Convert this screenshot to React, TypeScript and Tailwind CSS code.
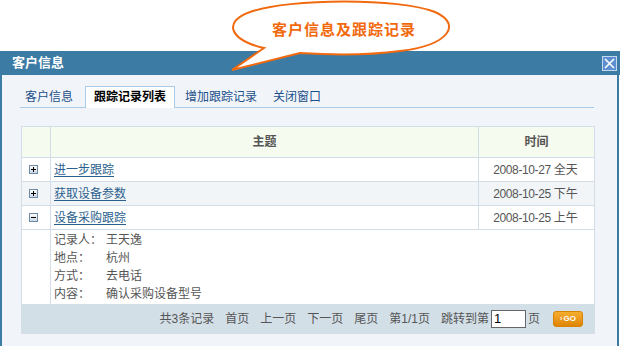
import React from "react";

const FONT = { fontFamily: '"Liberation Sans", "Noto Sans CJK SC", sans-serif' };

function PlusIcon({ minus }: { minus?: boolean }) {
  return (
    <svg width="9" height="9" viewBox="0 0 9 9" className="block">
      <defs>
        <linearGradient id={minus ? "gm" : "gp"} x1="0" y1="0" x2="0" y2="1">
          <stop offset="0" stopColor="#ffffff" />
          <stop offset="1" stopColor="#c9d6e3" />
        </linearGradient>
      </defs>
      <rect x="0.5" y="0.5" width="8" height="8" fill={`url(#${minus ? "gm" : "gp"})`} stroke="#6f8aa6" />
      <rect x="2" y="4" width="5" height="1" fill="#000" />
      {!minus && <rect x="4" y="2" width="1" height="5" fill="#000" />}
    </svg>
  );
}

const rows = [
  { title: "进一步跟踪", date: "2008-10-27", part: "全天", bg: "bg-white", minus: false },
  { title: "获取设备参数", date: "2008-10-25", part: "下午", bg: "bg-[#f1f5f8]", minus: false },
  { title: "设备采购跟踪", date: "2008-10-25", part: "上午", bg: "bg-white", minus: true },
];

const details = [
  ["记录人：", "王天逸"],
  ["地点：", "杭州"],
  ["方式：", "去电话"],
  ["内容：", "确认采购设备型号"],
];

export default function App() {
  return (
    <div className="relative w-[620px] h-[346px] bg-white overflow-hidden text-[12px]" style={FONT}>
      <div className="h-[51px]" />
      {/* header */}
      <div className="h-[24px] bg-[#3b7ba4] flex items-center justify-between pl-[12px] pr-[3px]">
        <span className="text-white font-bold text-[13px]">客户信息</span>
        <svg width="15" height="15" viewBox="0 0 15 15">
          <rect x="0.5" y="0.5" width="14" height="14" fill="#5b8fd2" stroke="#c6d8ef" />
          <path d="M3 3 L12 12 M12 3 L3 12" stroke="#ffffff" strokeWidth="1.6" />
        </svg>
      </div>
      {/* body */}
      <div className="h-[271px] bg-[#f1f5f9] border-l-[2px] border-r-[2px] border-[#3b7ba4] mr-[1px] pt-[11px]">
        {/* tabs */}
        <div className="ml-[18px] w-[574px] h-[22px] flex items-end border-b border-[#a9cbea]">
          <div className="h-[21px] px-[5px] flex items-center text-[#1d4f8a]">客户信息</div>
          <div className="ml-[7px] h-[22px] px-[8px] flex items-center bg-white border border-b-0 border-[#a9cbea] text-black font-bold mb-[-1px] pb-[1px]">跟踪记录列表</div>
          <div className="ml-[5px] h-[21px] px-[5px] flex items-center text-[#1d4f8a]">增加跟踪记录</div>
          <div className="ml-[6px] h-[21px] px-[5px] flex items-center text-[#1d4f8a]">关闭窗口</div>
        </div>
        {/* table */}
        <div className="ml-[19px] mt-[18px] w-[574px] border border-[#d3dde7] bg-white">
          <div className="flex h-[31px] bg-[#f5fbef] border-b border-[#d3dde7] text-[#555] font-bold">
            <div className="w-[29px] border-r border-[#d3dde7]" />
            <div className="w-[428px] border-r border-[#d3dde7] flex items-center justify-center">主题</div>
            <div className="flex-1 flex items-center justify-center">时间</div>
          </div>
          {rows.map((r) => (
            <div key={r.title} className={`flex h-[24px] border-b border-[#d3dde7] ${r.bg}`}>
              <div className="w-[29px] border-r border-[#d3dde7] flex items-center pl-[7px]">
                <PlusIcon minus={r.minus} />
              </div>
              <div className="w-[428px] border-r border-[#d3dde7] flex items-center pl-[3px]">
                <span className="text-[#2b5f8e] underline underline-offset-2">{r.title}</span>
              </div>
              <div className="flex-1 flex items-center justify-center text-[#555] pr-[2px]">
                <span className="tracking-[-0.4px]">{r.date}</span>
                <span className="ml-[3px]">{r.part}</span>
              </div>
            </div>
          ))}
          <div className="flex h-[74px]">
            <div className="w-[29px] border-r border-[#d3dde7]" />
            <div className="flex-1 pl-[3px] pt-[1px] text-[#555]">
              {details.map(([k, v]) => (
                <div key={k} className="flex h-[18px] items-center">
                  <span className="w-[52px]">{k}</span>
                  <span>{v}</span>
                </div>
              ))}
            </div>
          </div>
          <div className="h-[29px] bg-[#d3dfe7] flex items-center justify-end pr-[11px] text-[#555] gap-[11px]">
            <span>共3条记录</span>
            <span>首页</span>
            <span>上一页</span>
            <span>下一页</span>
            <span>尾页</span>
            <span>第1/1页</span>
            <span className="flex items-center gap-[2px]">
              跳转到第
              <span className="w-[35px] h-[18px] border border-[#666] bg-white flex items-center pl-[2px] text-black text-[13px]">1</span>
              页
            </span>
            <span className="ml-[2px] w-[30px] h-[16px] rounded-[3px] bg-gradient-to-b from-[#f5ad2e] to-[#df8600] border border-[#d88400] flex items-center justify-center text-white font-bold text-[8px] leading-none">
              <span className="text-[7px] mr-[1px]">›</span>GO
            </span>
          </div>
        </div>
      </div>
      {/* speech bubble */}
      <svg className="absolute left-0 top-0" width="620" height="80" viewBox="0 0 620 80">
        <path
          d="M264 48 C 230 40, 222 22, 250 12 C 290 -2, 400 -2, 435 12 C 462 24, 450 45, 400 51 C 370 55, 330 55, 300 53 L 232 70 Z"
          fill="#ffffff"
          stroke="#f26a0f"
          strokeWidth="2"
          strokeLinejoin="miter"
        />
      </svg>
      <div className="absolute left-[272px] top-[18px] text-[#f2690d] font-bold text-[15px] tracking-[1px]" style={{ fontFamily: '"Noto Sans CJK SC", sans-serif' }}>
        客户信息及跟踪记录
      </div>
    </div>
  );
}
